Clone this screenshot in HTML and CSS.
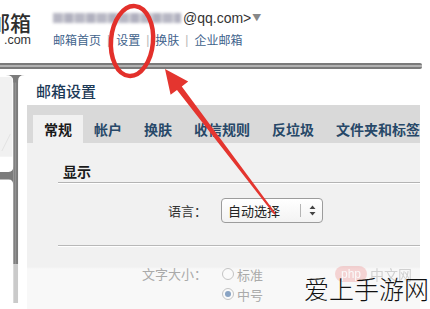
FILE: index.html
```html
<!DOCTYPE html>
<html lang="zh-CN">
<head>
<meta charset="utf-8">
<title>邮箱设置</title>
<link rel="stylesheet" href="styles.css">
</head>
<body>
<div class="page">
  <header class="top">
    <div class="logo">
      <div class="logo-name">邮箱</div>
      <div class="logo-dom">.com</div>
    </div>
    <div class="account">
      <div class="user"><span class="blur"></span><span class="mail">@qq.com&gt;</span><span class="caret">▼</span></div>
      <nav class="nav">
        <a class="nav-item">邮箱首页</a><span class="sep">|</span><a class="nav-item">设置</a><span class="sep">|</span><a class="nav-item">换肤</a><span class="sep">|</span><a class="nav-item">企业邮箱</a>
      </nav>
    </div>
  </header>
  <div class="topbar"></div>
  <div class="frame">
    <svg class="rail" width="20" height="240" viewBox="0 0 20 240">
      <rect x="0" y="2" width="13" height="84" fill="#f1f1f1"/>
      <path d="M2 80 L11 62" stroke="#e2e2e2" stroke-width="1"/>
      <rect x="14" y="0" width="5" height="199" fill="#7b7b7b"/>
      <rect x="15.5" y="0" width="1.5" height="199" fill="#929292"/>
      <rect x="14" y="199" width="5" height="41" fill="#cacaca"/>
      <path d="M6 0 H26 Q19 0 19 6 V8 H14 V6 Q14 0 6 0 Z" fill="#7b7b7b"/>
      <path d="M0 102 H9 Q14 102 14 96 V116 Q14 110 9 110 H0 Z" fill="#7b7b7b"/>
    </svg>
    <main class="panel">
      <h1 class="title">邮箱设置</h1>
      <div class="tabs">
        <span class="tab active">常规</span>
        <span class="tab">帐户</span>
        <span class="tab">换肤</span>
        <span class="tab">收信规则</span>
        <span class="tab">反垃圾</span>
        <span class="tab">文件夹和标签</span>
      </div>
      <div class="content">
        <div class="section-head">显示</div>
        <div class="row lang-row">
          <span class="label">语言：</span>
          <span class="select">
            <span class="select-text">自动选择</span>
            <span class="select-sep"></span>
            <svg class="select-arrows" width="7" height="11" viewBox="0 0 7 11"><path d="M3.5 0.5 L6.5 4 H0.5 Z M3.5 10.5 L6.5 7 H0.5 Z" fill="#444"/></svg>
          </span>
        </div>
        <div class="row size-row">
          <span class="label faint">文字大小：</span>
          <div class="radios">
            <label class="radio"><span class="dot"></span>标准</label>
            <label class="radio"><span class="dot on"></span>中号</label>
          </div>
        </div>
      </div>
    </main>
  </div>

  <div class="wm-php"><span class="wm-pill">php</span><span class="wm-cn">中文网</span></div>
  <div class="wm-main">爱上手游网</div>

  <svg class="annot" width="430" height="309" viewBox="0 0 430 309">
    <ellipse cx="132" cy="41" rx="21" ry="35" transform="rotate(5 132 41)" fill="none" stroke="#e3302b" stroke-width="4.5"/>
    <polygon points="165,69 188.2,81.6 181.8,86.4 275.8,213.4 274.2,214.6 177,90 170.6,94.8" fill="#e4352f"/>
  </svg>
</div>
</body>
</html>
```

FILE: styles.css
```css
* { box-sizing: border-box; }
html, body { margin: 0; padding: 0; }
body {
  width: 430px;
  height: 309px;
  overflow: hidden;
  background: #ffffff;
  font-family: "Noto Sans CJK SC", "Liberation Sans", sans-serif;
  color: #333;
}
.page {
  position: relative;
  width: 430px;
  height: 309px;
  overflow: hidden;
  display: flex;
  flex-direction: column;
}

/* header */
.top {
  height: 63px;
  display: flex;
  padding-top: 10px;
  flex-shrink: 0;
}
.logo {
  margin-left: -11px;
  display: flex;
  flex-direction: column;
  width: 42px;
}
.logo-name {
  font-size: 21px;
  line-height: 24px;
  color: #2e2e2e;
  font-weight: 500;
  white-space: nowrap;
}
.logo-dom {
  font-family: "Liberation Sans", sans-serif;
  font-size: 12.5px;
  line-height: 13px;
  color: #333;
  text-align: right;
  padding-right: 0;
}
.account {
  margin-left: 22px;
  display: flex;
  flex-direction: column;
}
.user {
  display: flex;
  align-items: center;
  height: 16px;
}
.blur {
  display: inline-block;
  width: 128px;
  height: 10px;
  margin-right: 2px;
  background: repeating-linear-gradient(90deg, #a6a6b6 0 9px, #c4c4cc 9px 12px, #9d9daf 12px 20px, #d0d0d6 20px 22px);
  filter: blur(1.4px);
  opacity: 0.8;
}
.mail {
  font-family: "Liberation Sans", sans-serif;
  font-size: 14px;
  color: #333;
}
.caret {
  font-size: 9px;
  color: #888;
  margin-left: 1px;
  margin-top: -2px;
}
.nav {
  margin-top: 6px;
  display: flex;
  align-items: center;
  font-size: 12px;
  line-height: 16px;
  white-space: nowrap;
}
.nav-item { color: #3f638c; }
.sep {
  color: #b5b5b5;
  padding: 0 6px;
  font-family: "Liberation Sans", sans-serif;
}

/* frame */
.topbar {
  height: 6px;
  margin-right: 8px;
  flex-shrink: 0;
  background: linear-gradient(#7a7a7a 0, #7a7a7a 1.5px, #b2b2b2 2px, #b2b2b2 3.5px, #7a7a7a 4px, #7a7a7a 6px);
  border-radius: 0 2px 2px 0;
}
.frame {
  flex: 1;
  display: flex;
  min-height: 0;
}
.rail {
  flex-shrink: 0;
  display: block;
  width: 19px;
  overflow: visible;
}
.panel {
  flex: 1;
  padding: 0 10px 0 8px;
  display: flex;
  flex-direction: column;
  min-width: 0;
}
.title {
  margin: 12px 0 4px 9px;
  font-size: 15px;
  line-height: 20px;
  font-weight: 500;
  color: #1d3a57;
}
.tabs {
  height: 38px;
  background: #d9d9d9;
  padding: 10px 0 0 6px;
  display: flex;
  white-space: nowrap;
  overflow: hidden;
}
.tab {
  height: 28px;
  line-height: 28px;
  padding: 0 11px;
  font-size: 14px;
  font-weight: 700;
  color: #274868;
  flex-shrink: 0;
}
.tab.active {
  background: #f1f1f1;
  color: #1a1a1a;
}
.content {
  flex: 1;
  padding: 18px 0 0 31px;
  background: linear-gradient(#f1f1f1 0, #f1f1f1 124px, #f8f8f8 126px);
}
.section-head {
  font-size: 14px;
  font-weight: 700;
  line-height: 20px;
  color: #1a1a1a;
  padding: 0 0 1px 5px;
  border-bottom: 1px solid #b4b4b4;
  box-shadow: 0 1px 0 #ffffff;
}
.row {
  display: flex;
}
.label {
  width: 149px;
  text-align: right;
  font-size: 13px;
  line-height: 25px;
  color: #333;
  flex-shrink: 0;
}
.label.faint { color: #aaa; line-height: 20px; }
.lang-row {
  padding: 15px 0 22px;
  border-bottom: 1px solid #b8b8b8;
  box-shadow: 0 1px 0 #ffffff;
}
.select {
  margin-left: 14px;
  width: 102px;
  height: 25px;
  border: 1px solid #9c9c9c;
  border-radius: 4px;
  background: linear-gradient(#ffffff, #f3f3f3);
  display: flex;
  align-items: center;
  padding-left: 6px;
}
.select-text {
  font-size: 13px;
  color: #222;
  width: 72px;
}
.select-sep {
  width: 1px;
  height: 13px;
  background: #b5b5b5;
}
.select-arrows { margin-left: 8px; display: block; }
.size-row {
  padding-top: 18px;
}
.radios {
  margin-left: 14px;
  display: flex;
  flex-direction: column;
}
.radio {
  display: flex;
  align-items: center;
  height: 20px;
  font-size: 13px;
  color: #aaa;
}
.dot {
  width: 12px;
  height: 12px;
  border: 1px solid #c4c4c4;
  border-radius: 50%;
  background: #fafafa;
  margin: 0 3px 0 1px;
  position: relative;
}
.dot.on::after {
  content: "";
  position: absolute;
  left: 2px;
  top: 2px;
  width: 6px;
  height: 6px;
  border-radius: 50%;
  background: #8aa4c4;
}

/* watermarks and annotations (overlays) */
.wm-php {
  position: absolute;
  left: 335px;
  top: 264px;
  display: flex;
  align-items: center;
  opacity: 0.35;
}
.wm-pill {
  background: #ee8f8f;
  color: #fff;
  font-family: "Liberation Sans", sans-serif;
  font-size: 12px;
  border-radius: 9px;
  padding: 1px 6px;
}
.wm-cn {
  font-size: 14px;
  color: #888;
  margin-left: 3px;
}
.wm-main {
  position: absolute;
  left: 304px;
  top: 271px;
  font-size: 25px;
  line-height: 34px;
  font-weight: 300;
  color: #111;
  white-space: nowrap;
}
.annot {
  position: absolute;
  left: 0;
  top: 0;
  pointer-events: none;
}
```
